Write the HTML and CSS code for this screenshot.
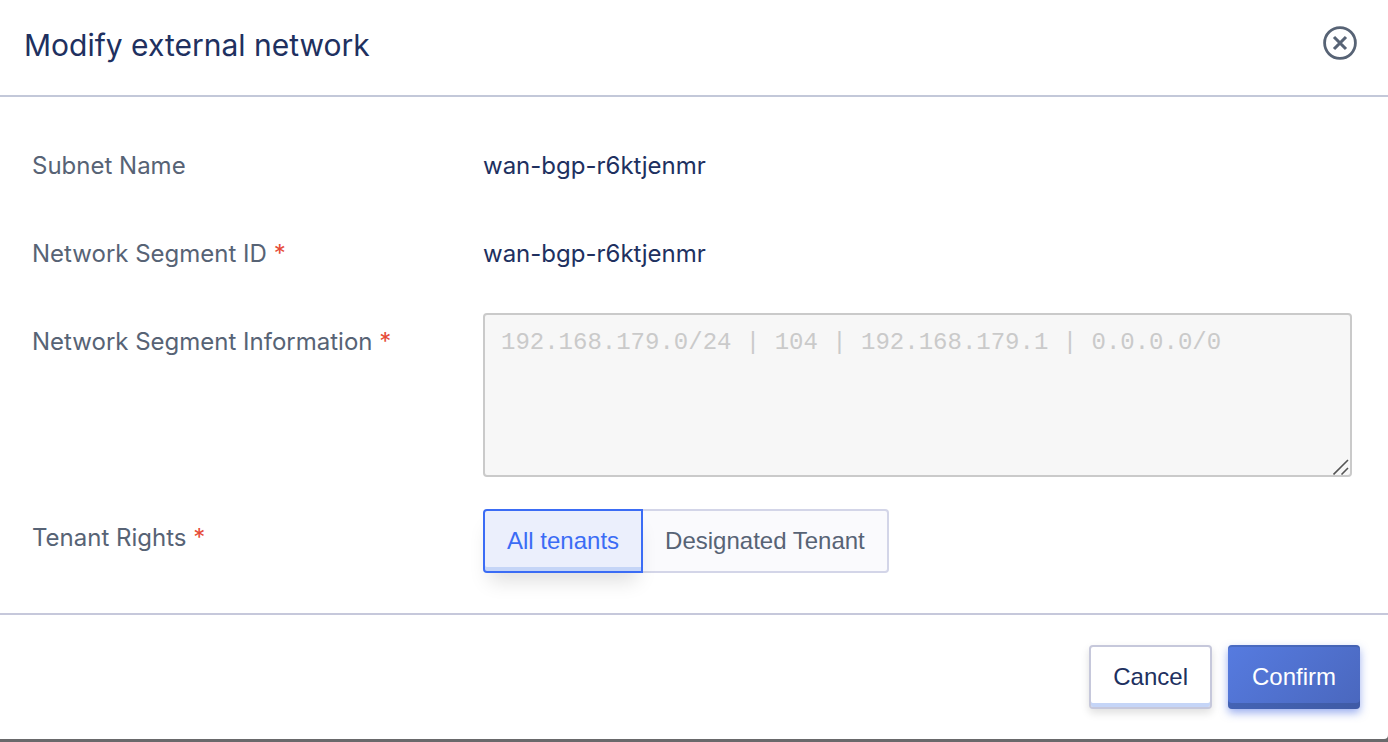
FILE: index.html
```html
<!DOCTYPE html>
<html lang="en">
<head>
<meta charset="utf-8">
<meta name="viewport" content="width=device-width, initial-scale=1">
<title>Modify external network</title>
<link rel="stylesheet" href="styles.css">
</head>
<body>
<form class="dialog" role="dialog" aria-labelledby="dialog-title">
  <header class="dialog-header">
    <h1 class="dialog-title" id="dialog-title">Modify external network</h1>
    <button class="close" type="button" aria-label="Close">
      <svg class="close-icon" viewBox="0 0 36 36" fill="none" stroke="currentColor" aria-hidden="true">
        <circle cx="18" cy="18" r="15.4" stroke-width="2.8"/>
        <path d="M12 12l12 12M24 12L12 24" stroke-width="3.1"/>
      </svg>
    </button>
  </header>
  <div class="dialog-body">
    <div class="row">
      <span class="label">Subnet Name</span>
      <span class="value">wan-bgp-r6ktjenmr</span>
    </div>
    <div class="row">
      <span class="label">Network Segment ID <span class="required">*</span></span>
      <span class="value">wan-bgp-r6ktjenmr</span>
    </div>
    <div class="row">
      <label class="label" for="segment-info">Network Segment Information <span class="required">*</span></label>
      <div class="area-wrap">
        <textarea class="area" id="segment-info" disabled>192.168.179.0/24 | 104 | 192.168.179.1 | 0.0.0.0/0</textarea>
        <svg class="grip" viewBox="0 0 16 16" fill="none" stroke="#555" stroke-width="1.6" aria-hidden="true">
          <path d="M0.5 15.5L15 1M8.5 15.5l6.5-6.5"/>
        </svg>
      </div>
    </div>
    <div class="row">
      <span class="label" id="rights-label">Tenant Rights <span class="required">*</span></span>
      <div class="segmented" role="radiogroup" aria-labelledby="rights-label">
        <label class="segment"><input class="segment-input" type="radio" name="rights" checked>All tenants</label>
        <label class="segment"><input class="segment-input" type="radio" name="rights">Designated Tenant</label>
      </div>
    </div>
  </div>
  <footer class="dialog-footer">
    <button class="button" type="button">Cancel</button>
    <button class="button button-primary" type="submit">Confirm</button>
  </footer>
</form>
</body>
</html>
```

FILE: styles.css
```css
* {
  box-sizing: border-box;
}

body {
  display: flex;
  flex-direction: column;
  min-height: 100vh;
  margin: 0;
  padding-bottom: 3px;
  background: #69696b;
  font-family: Inter, sans-serif;
  font-size: 24px;
  color: #20305f;
}

.dialog {
  display: flex;
  flex: 1;
  flex-direction: column;
  background: #fff;
  border-bottom-right-radius: 4px;
}

.dialog-header {
  display: flex;
  align-items: flex-start;
  justify-content: space-between;
  padding: 20px 30px 25px 24px;
  border-bottom: 2px solid #c3c8d9;
}

.dialog-title {
  margin: 0;
  font-size: 30px;
  font-weight: 400;
  line-height: 50px;
}

.close {
  display: flex;
  align-items: center;
  height: 46px;
  padding: 0;
  border: 0;
  background: none;
  color: #576375;
  cursor: pointer;
}

.close-icon {
  width: 36px;
  height: 36px;
}

.dialog-body {
  display: grid;
  gap: 32px;
  padding: 40px 36px 40px 32px;
}

.row {
  display: grid;
  grid-template-columns: 451px minmax(0, 1fr);
  align-items: start;
}

.label,
.value {
  padding-top: 2px;
  line-height: 54px;
}

.label {
  color: #576375;
}

.required {
  font-size: 24px;
  line-height: 24px;
  color: #e64c38;
}

.area-wrap {
  position: relative;
}

.area {
  display: block;
  width: 100%;
  height: 164px;
  padding: 14px 16px;
  border: 2px solid #cacaca;
  border-radius: 4px;
  background: #f7f7f7;
  color: #cacaca;
  font-family: "Liberation Mono", monospace;
  font-size: 24px;
  line-height: 28px;
  resize: none;
}

.grip {
  position: absolute;
  right: 3px;
  bottom: 2px;
  width: 16px;
  height: 16px;
}

.segmented {
  display: flex;
  font-family: "Liberation Sans", Arial, sans-serif;
}

.segment {
  position: relative;
  height: 64px;
  padding: 0 22px;
  border: 2px solid #d3d5e8;
  border-left-width: 0;
  border-radius: 0 4px 4px 0;
  background: #fafafd;
  color: #576375;
  line-height: 60px;
  cursor: pointer;
}

.segment:has(:checked) {
  z-index: 1;
  border: 2px solid #3b6cf5;
  border-radius: 4px 0 0 4px;
  background: #ebeffc;
  box-shadow: inset 0 -4px #c5d5f7, 0 14px 20px -6px rgba(0, 0, 0, 0.13);
  color: #3b6cf5;
}

.segment-input {
  position: absolute;
  inset: 0;
  margin: 0;
  opacity: 0;
}

.dialog-footer {
  display: flex;
  flex: 1;
  align-items: flex-start;
  justify-content: flex-end;
  gap: 16px;
  padding: 30px 28px;
  border-top: 2px solid #c6c8db;
}

.button {
  height: 64px;
  padding: 0 22px;
  border: 2px solid #c6c8db;
  border-radius: 4px;
  background: #fff;
  box-shadow: inset 0 -4px #c5d5f7, 0 4px 8px rgba(0, 0, 0, 0.13);
  color: #20305f;
  font-family: "Liberation Sans", Arial, sans-serif;
  font-size: 24px;
  line-height: 60px;
  cursor: pointer;
}

.button-primary {
  border-width: 0;
  padding: 0 24px;
  background: linear-gradient(135deg, #567be0, #4a67bd);
  box-shadow: inset 0 2px rgba(48, 72, 130, 0.3), inset 0 -6px rgba(48, 72, 130, 0.4), 0 4px 8px rgba(59, 98, 225, 0.5);
  color: #fff;
}
```
